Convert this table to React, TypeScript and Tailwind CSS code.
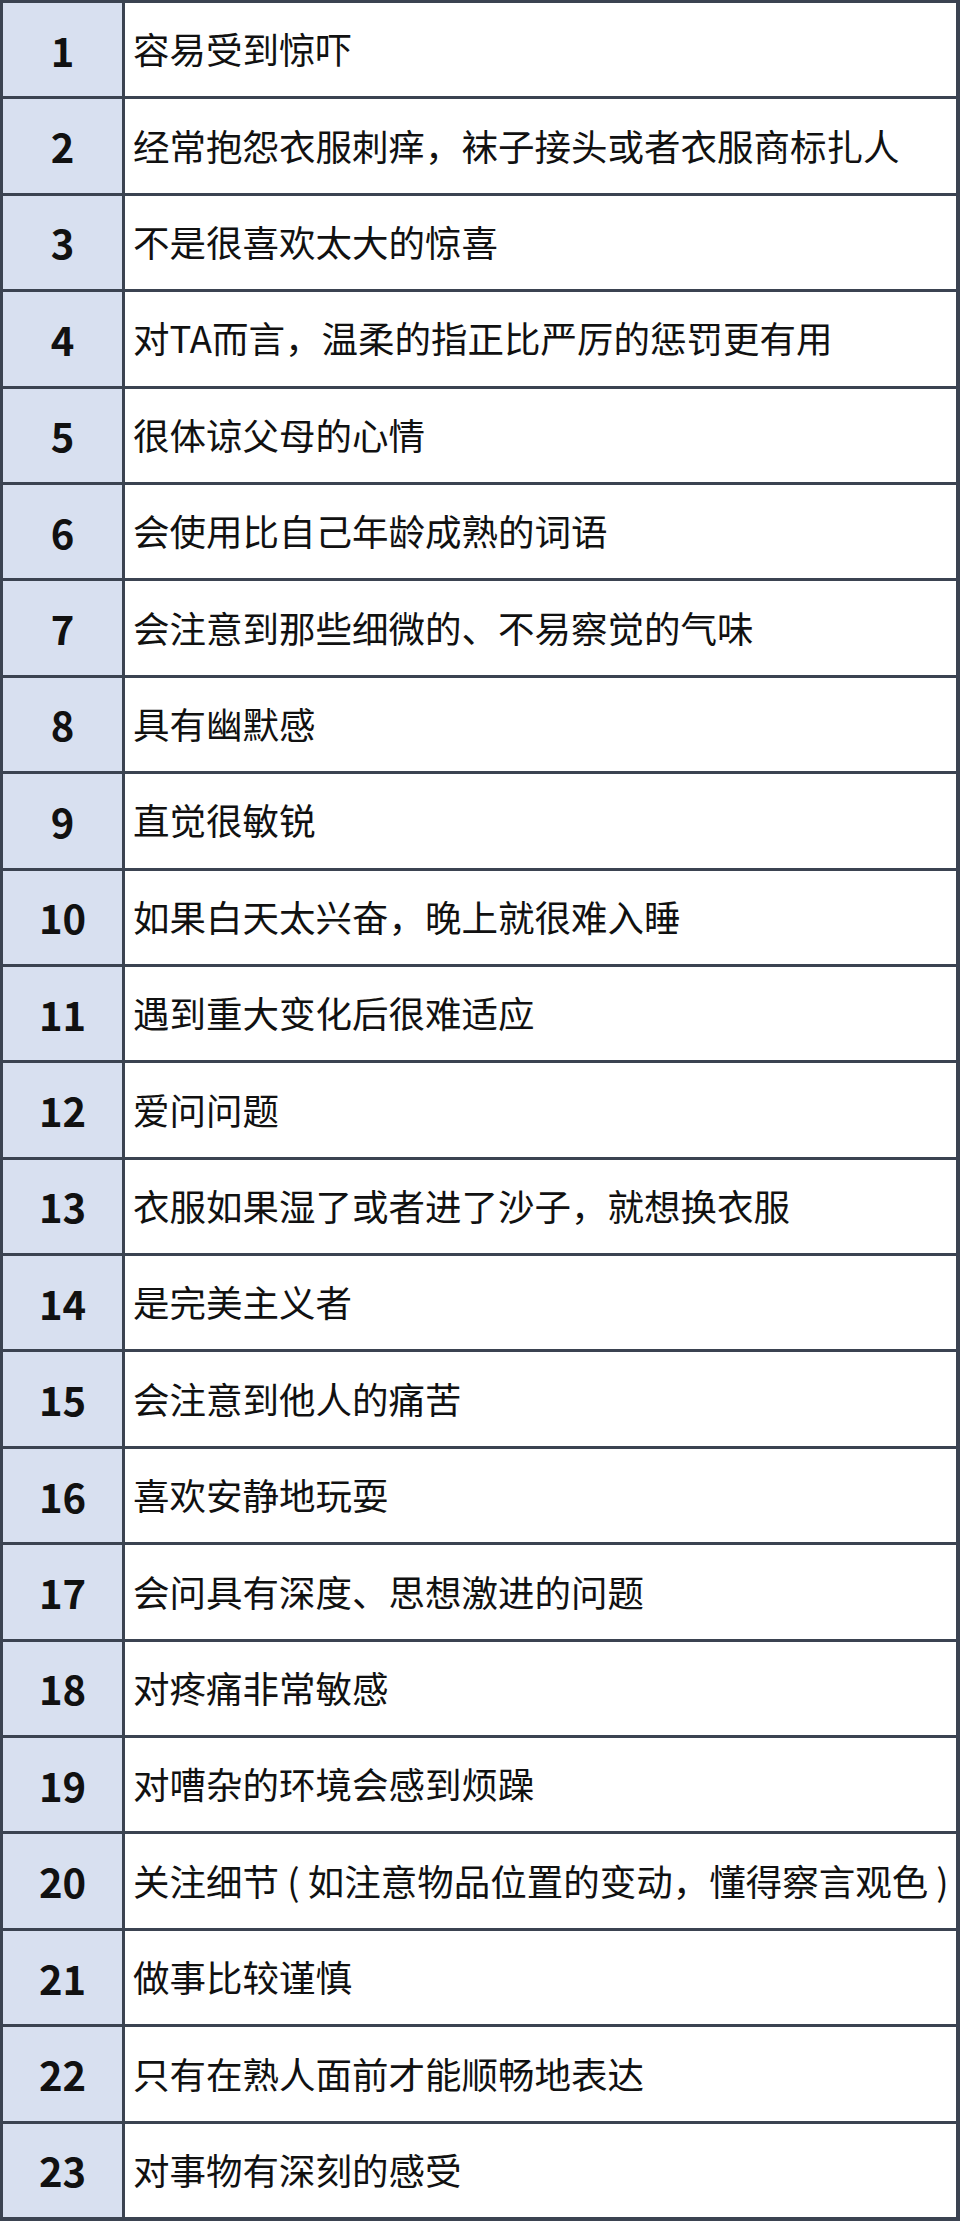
const items = [
  '容易受到惊吓',
  '经常抱怨衣服刺痒，袜子接头或者衣服商标扎人',
  '不是很喜欢太大的惊喜',
  '对TA而言，温柔的指正比严厉的惩罚更有用',
  '很体谅父母的心情',
  '会使用比自己年龄成熟的词语',
  '会注意到那些细微的、不易察觉的气味',
  '具有幽默感',
  '直觉很敏锐',
  '如果白天太兴奋，晚上就很难入睡',
  '遇到重大变化后很难适应',
  '爱问问题',
  '衣服如果湿了或者进了沙子，就想换衣服',
  '是完美主义者',
  '会注意到他人的痛苦',
  '喜欢安静地玩耍',
  '会问具有深度、思想激进的问题',
  '对疼痛非常敏感',
  '对嘈杂的环境会感到烦躁',
  '关注细节 ( 如注意物品位置的变动，懂得察言观色 )',
  '做事比较谨慎',
  '只有在熟人面前才能顺畅地表达',
  '对事物有深刻的感受',
]

export default function App() {
  return (
    <div
      className="w-[960px] h-[2221px] bg-[#3b4351] p-[3px] pr-[4px] pb-[4px] flex flex-col gap-[3px]"
      style={{ fontFamily: '"Noto Sans CJK SC", sans-serif' }}
    >
      {items.map((text, i) => (
        <div key={i} className="flex-1 grid grid-cols-[119px_1fr] gap-[3px]">
          <div className="bg-[#d8e0f0] flex items-center justify-center text-[40px] font-bold text-[#111]">
            {i + 1}
          </div>
          <div className="bg-white flex items-center pl-[8px] text-[36.5px] text-[#111] whitespace-nowrap">
            {text}
          </div>
        </div>
      ))}
    </div>
  )
}
